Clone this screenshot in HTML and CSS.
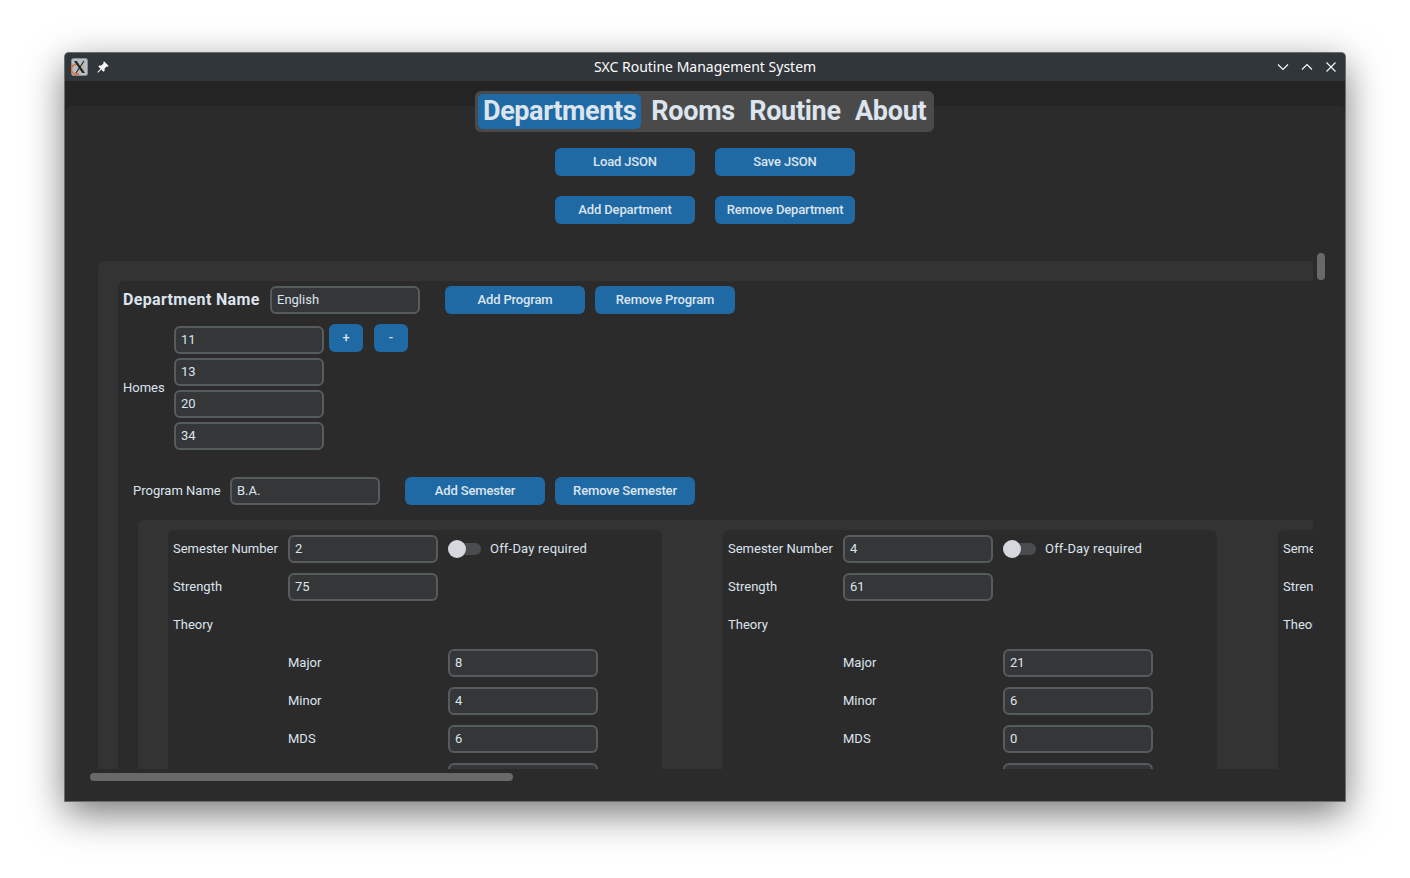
FILE: index.html
```html
<!DOCTYPE html>
<html lang="en">
<head>
  <meta charset="UTF-8">
  <meta name="viewport" content="width=device-width, initial-scale=1.0">
  <title>SXC Routine Management System</title>
  <link rel="stylesheet" href="styles.css">
</head>
<body>
  <div class="window">
    <div class="titlebar">
      <div class="title-left">
        <svg class="app-icon" width="17" height="18" viewBox="0 0 17 18">
          <rect x="0.5" y="0.5" width="16" height="17" rx="2" fill="#b9bdc0" stroke="#8c9094"/>
          <path d="M7 6.500a5 5 0 1 0 1 9" fill="none" stroke="#d8703a" stroke-width="1.500"/>
          <path d="M10 7a5 5 0 0 1 1 8" fill="none" stroke="#d9a05f" stroke-width="1"/>
          <path d="M3 3h2.800l8.200 12h-2.800z" fill="#26282a"/>
          <path d="M13 3l-8 12" stroke="#26282a" stroke-width="1.200"/>
        </svg>
        <svg class="pin-icon" width="12" height="12" viewBox="0 0 12 12">
          <path d="M7 0.300l4.700 4.700-1.200.7-1-.2-2 2.200.1 2-1 1L4.300 8.400 1 11.700l-.6-.6 3.200-3.400L1.300 5.400l1-1 2 .1 2.200-2-.2-1z" fill="#fcfcfc"/>
        </svg>
      </div>
      <div class="title-text">SXC Routine Management System</div>
      <div class="title-buttons">
        <svg width="12" height="12" viewBox="0 0 12 12"><path d="M1 3.500l5 5 5-5" class="wm-stroke"/></svg>
        <svg width="12" height="12" viewBox="0 0 12 12"><path d="M1 8.500l5-5 5 5" class="wm-stroke"/></svg>
        <svg width="12" height="12" viewBox="0 0 12 12"><path d="M1.500 1.500l9 9M10.500 1.500l-9 9" class="wm-stroke"/></svg>
      </div>
    </div>

    <div class="tabbar">
      <div class="tabs">
        <span class="tab active">Departments</span>
        <span class="tab">Rooms</span>
        <span class="tab">Routine</span>
        <span class="tab">About</span>
      </div>
    </div>

    <div class="tabpanel">
      <div class="actions">
        <button class="btn">Load JSON</button>
        <button class="btn">Save JSON</button>
      </div>
      <div class="actions">
        <button class="btn">Add Department</button>
        <button class="btn">Remove Department</button>
      </div>

      <div class="scroll-row">
        <div class="scroll-area">
          <div class="dept">
            <div class="dept-row">
              <span class="dept-label">Department Name</span>
              <input class="field" value="English">
              <button class="btn first-btn">Add Program</button>
              <button class="btn">Remove Program</button>
            </div>

            <div class="homes">
              <span class="homes-label">Homes</span>
              <div class="homes-list">
                <input class="field" value="11">
                <input class="field" value="13">
                <input class="field" value="20">
                <input class="field" value="34">
              </div>
              <div class="homes-btns">
                <button class="btn small">+</button>
                <button class="btn small">-</button>
              </div>
            </div>

            <div class="program-row">
              <span class="program-label">Program Name</span>
              <input class="field" value="B.A.">
              <button class="btn first-btn">Add Semester</button>
              <button class="btn">Remove Semester</button>
            </div>

            <div class="semesters">
              <div class="semester">
                <span class="lbl">Semester Number</span>
                <input class="field" value="2">
                <div class="offday"><span class="switch"><span class="knob"></span></span><span class="lbl offday-text">Off-Day required</span></div>
                <span class="lbl">Strength</span>
                <input class="field span-2" value="75">
                <span class="lbl span-all">Theory</span>
                <span class="lbl col-2">Major</span><input class="field" value="8">
                <span class="lbl col-2">Minor</span><input class="field" value="4">
                <span class="lbl col-2">MDS</span><input class="field" value="6">
                <span class="col-2"></span><input class="field">
              </div>
              <div class="semester">
                <span class="lbl">Semester Number</span>
                <input class="field" value="4">
                <div class="offday"><span class="switch"><span class="knob"></span></span><span class="lbl offday-text">Off-Day required</span></div>
                <span class="lbl">Strength</span>
                <input class="field span-2" value="61">
                <span class="lbl span-all">Theory</span>
                <span class="lbl col-2">Major</span><input class="field" value="21">
                <span class="lbl col-2">Minor</span><input class="field" value="6">
                <span class="lbl col-2">MDS</span><input class="field" value="0">
                <span class="col-2"></span><input class="field">
              </div>
              <div class="semester">
                <span class="lbl span-all">Semester Number</span>
                <span class="lbl span-all">Strength</span>
                <span class="lbl span-all">Theory</span>
              </div>
            </div>
          </div>
        </div>
        <div class="vbar"></div>
      </div>
      <div class="hbar"></div>
    </div>
  </div>
</body>
</html>
```

FILE: styles.css
```css
* {
  box-sizing: border-box;
}
body {
  margin: 0;
  padding: 53px 65px;
  height: 878px;
  overflow: hidden;
  background: #fff;
  font-family: Roboto, sans-serif;
  font-size: 13px;
  color: #dce4ee;
}
.window {
  width: 1280px;
  height: 748px;
  display: flex;
  flex-direction: column;
  background: #242424;
  border-radius: 4px 4px 0 0;
  box-shadow: 0 0 0 1px #6a6e71, 0 12px 38px rgba(0, 0, 0, 0.55);
}

/* title bar */
.titlebar {
  height: 28px;
  flex: none;
  display: flex;
  align-items: center;
  justify-content: space-between;
  padding: 0 8px 0 6px;
  background: #31363b;
  border-radius: 4px 4px 0 0;
  color: #fcfcfc;
}
.title-left {
  width: 120px;
  display: flex;
  align-items: center;
  gap: 9px;
}
.title-text {
  padding: 0 0 2px 2px;
  font-family: "Noto Sans", sans-serif;
  font-size: 14px;
}
.title-buttons {
  width: 120px;
  display: flex;
  justify-content: flex-end;
  gap: 12px;
}
.wm-stroke {
  fill: none;
  stroke: #fcfcfc;
  stroke-width: 1.100;
}

/* tabs */
.tabbar {
  height: 25px;
  flex: none;
  padding: 10px 1px 0 0;
  display: flex;
  justify-content: center;
  position: relative;
  z-index: 1;
}
.tabs {
  height: 41px;
  width: 459px;
  padding: 3px;
  display: flex;
  gap: 6.300px;
  background: #4a4a4a;
  border-radius: 6px;
}
.tab {
  padding: 0 4px;
  border-radius: 5px;
  font-size: 27px;
  font-weight: 700;
  line-height: 35px;
  letter-spacing: -0.300px;
}
.tab.active {
  width: 163px;
  padding: 0 5px;
  background: #1f6aa5;
  letter-spacing: -0.400px;
}

.tabpanel {
  flex: 1;
  min-height: 0;
  padding-top: 42px;
  background: #2b2b2b;
  border-radius: 6px 6px 0 0;
}
.actions {
  display: flex;
  justify-content: center;
  gap: 20px;
  margin-bottom: 20px;
}
.btn {
  width: 140px;
  height: 28px;
  padding: 0 0 2px;
  border: none;
  border-radius: 6px;
  background: #1f6aa5;
  color: #dce4ee;
  font-family: Roboto, sans-serif;
  font-size: 13px;
  font-weight: 500;
  letter-spacing: -0.150px;
}
.field {
  width: 150px;
  height: 28px;
  flex: none;
  padding: 0 5px 2px;
  border: 2px solid #565b5e;
  border-radius: 6px;
  background: #343638;
  color: #dce4ee;
  font-family: Roboto, sans-serif;
  font-size: 13px;
}

/* scroll frame */
.scroll-row {
  display: flex;
  align-items: flex-start;
  margin: 37px 0 0 33px;
}
.scroll-area {
  width: 1215px;
  height: 508px;
  padding: 20px 0 0 20px;
  overflow: hidden;
  background: #333;
  border-radius: 6px 0 0 0;
}
.vbar {
  width: 8px;
  height: 27px;
  margin: -8px 0 0 4px;
  border-radius: 4px;
  background: #696969;
}
.hbar {
  width: 423px;
  height: 8px;
  margin: 4px 0 0 25px;
  border-radius: 4px;
  background: #696969;
}

.dept {
  width: 1400px;
  height: 800px;
  padding-top: 5px;
  background: #2b2b2b;
  border-radius: 6px 0 0 0;
}
.dept-row {
  display: flex;
  align-items: center;
  padding-left: 5px;
}
.dept-label {
  width: 147px;
  padding-bottom: 2px;
  font-size: 16px;
  font-weight: 700;
  letter-spacing: 0.350px;
  white-space: nowrap;
}
.first-btn {
  margin: 0 10px 0 25px;
}
.homes {
  display: flex;
  align-items: center;
  margin-top: 10px;
  padding-left: 5px;
}
.homes-label {
  width: 51px;
}
.homes-list {
  display: flex;
  flex-direction: column;
  gap: 4px;
  margin-top: 2px;
}
.homes-btns {
  align-self: flex-start;
  display: flex;
  gap: 11px;
  margin-left: 5px;
}
.btn.small {
  width: 34px;
}
.program-row {
  display: flex;
  align-items: center;
  margin-top: 27px;
  padding-left: 15px;
}
.program-label {
  width: 97px;
  padding-bottom: 2px;
}
.semesters {
  display: flex;
  gap: 61px;
  margin: 15px 0 0 20px;
  padding: 10px 0 0 30px;
  background: #333;
  border-radius: 6px 0 0 0;
}
.semester {
  width: 494px;
  flex: none;
  height: 400px;
  display: grid;
  grid-template-columns: 115px 160px 1fr;
  grid-auto-rows: 28px;
  row-gap: 10px;
  align-items: center;
  align-content: start;
  padding: 5px 0 0 5px;
  background: #2b2b2b;
  border-radius: 6px 6px 0 0;
}
.lbl {
  padding-bottom: 2px;
  white-space: nowrap;
}
.offday {
  display: flex;
  align-items: center;
  gap: 9px;
}
.offday-text {
  letter-spacing: 0.200px;
}
.switch {
  width: 33px;
  height: 12px;
  display: block;
  background: #4a4d50;
  border-radius: 6px;
}
.knob {
  width: 18px;
  height: 18px;
  display: block;
  margin-top: -3px;
  background: #d5d9de;
  border-radius: 50%;
}
.span-2 {
  grid-column: 2 / span 1;
}
.span-all {
  grid-column: 1 / -1;
}
.col-2 {
  grid-column: 2;
}
```
